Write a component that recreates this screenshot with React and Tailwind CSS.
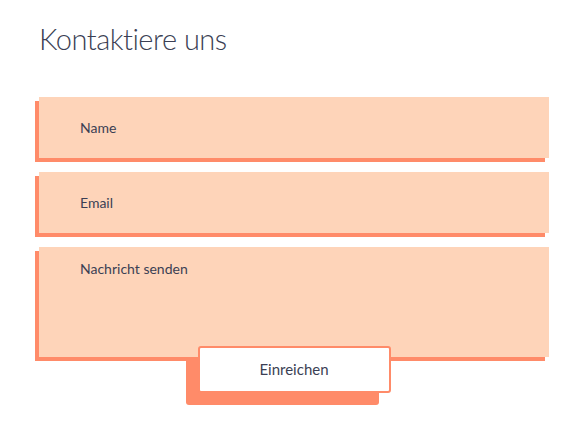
export default function App() {
  return (
    <div className="min-h-[432px] bg-white font-['Lato',sans-serif] text-[#3b3f54]">
      <div className="pl-[39px] pt-[19px] w-[549px]">
        <h1 className="text-[29px] font-light leading-[40px] tracking-[-0.5px]">Kontaktiere uns</h1>

        <form className="mt-[38px] flex flex-col gap-[14px]" onSubmit={(e) => e.preventDefault()}>
          <input
            type="text"
            placeholder="Name"
            className="h-[61px] w-[510px] bg-[#fed4b9] pl-[41px] text-[14px] outline-none shadow-[-4px_4px_0_#ff8b69] placeholder:text-[#3b3f54]"
          />
          <input
            type="email"
            placeholder="Email"
            className="h-[61px] w-[510px] bg-[#fed4b9] pl-[41px] text-[14px] outline-none shadow-[-4px_4px_0_#ff8b69] placeholder:text-[#3b3f54]"
          />
          <textarea
            placeholder="Nachricht senden"
            className="h-[110px] w-[510px] resize-none bg-[#fed4b9] pl-[41px] pt-[11px] text-[14px] outline-none shadow-[-4px_4px_0_#ff8b69] placeholder:text-[#3b3f54]"
          />
          <div className="flex justify-center -mt-[25px]">
            <button
              type="submit"
              className="relative h-[47px] w-[193px] rounded-[3px] border-2 border-[#ff8b69] bg-white text-[15px] text-[#3b3f54] shadow-[-12px_12px_0_#ff8b69]"
            >
              Einreichen
            </button>
          </div>
        </form>
      </div>
    </div>
  );
}
